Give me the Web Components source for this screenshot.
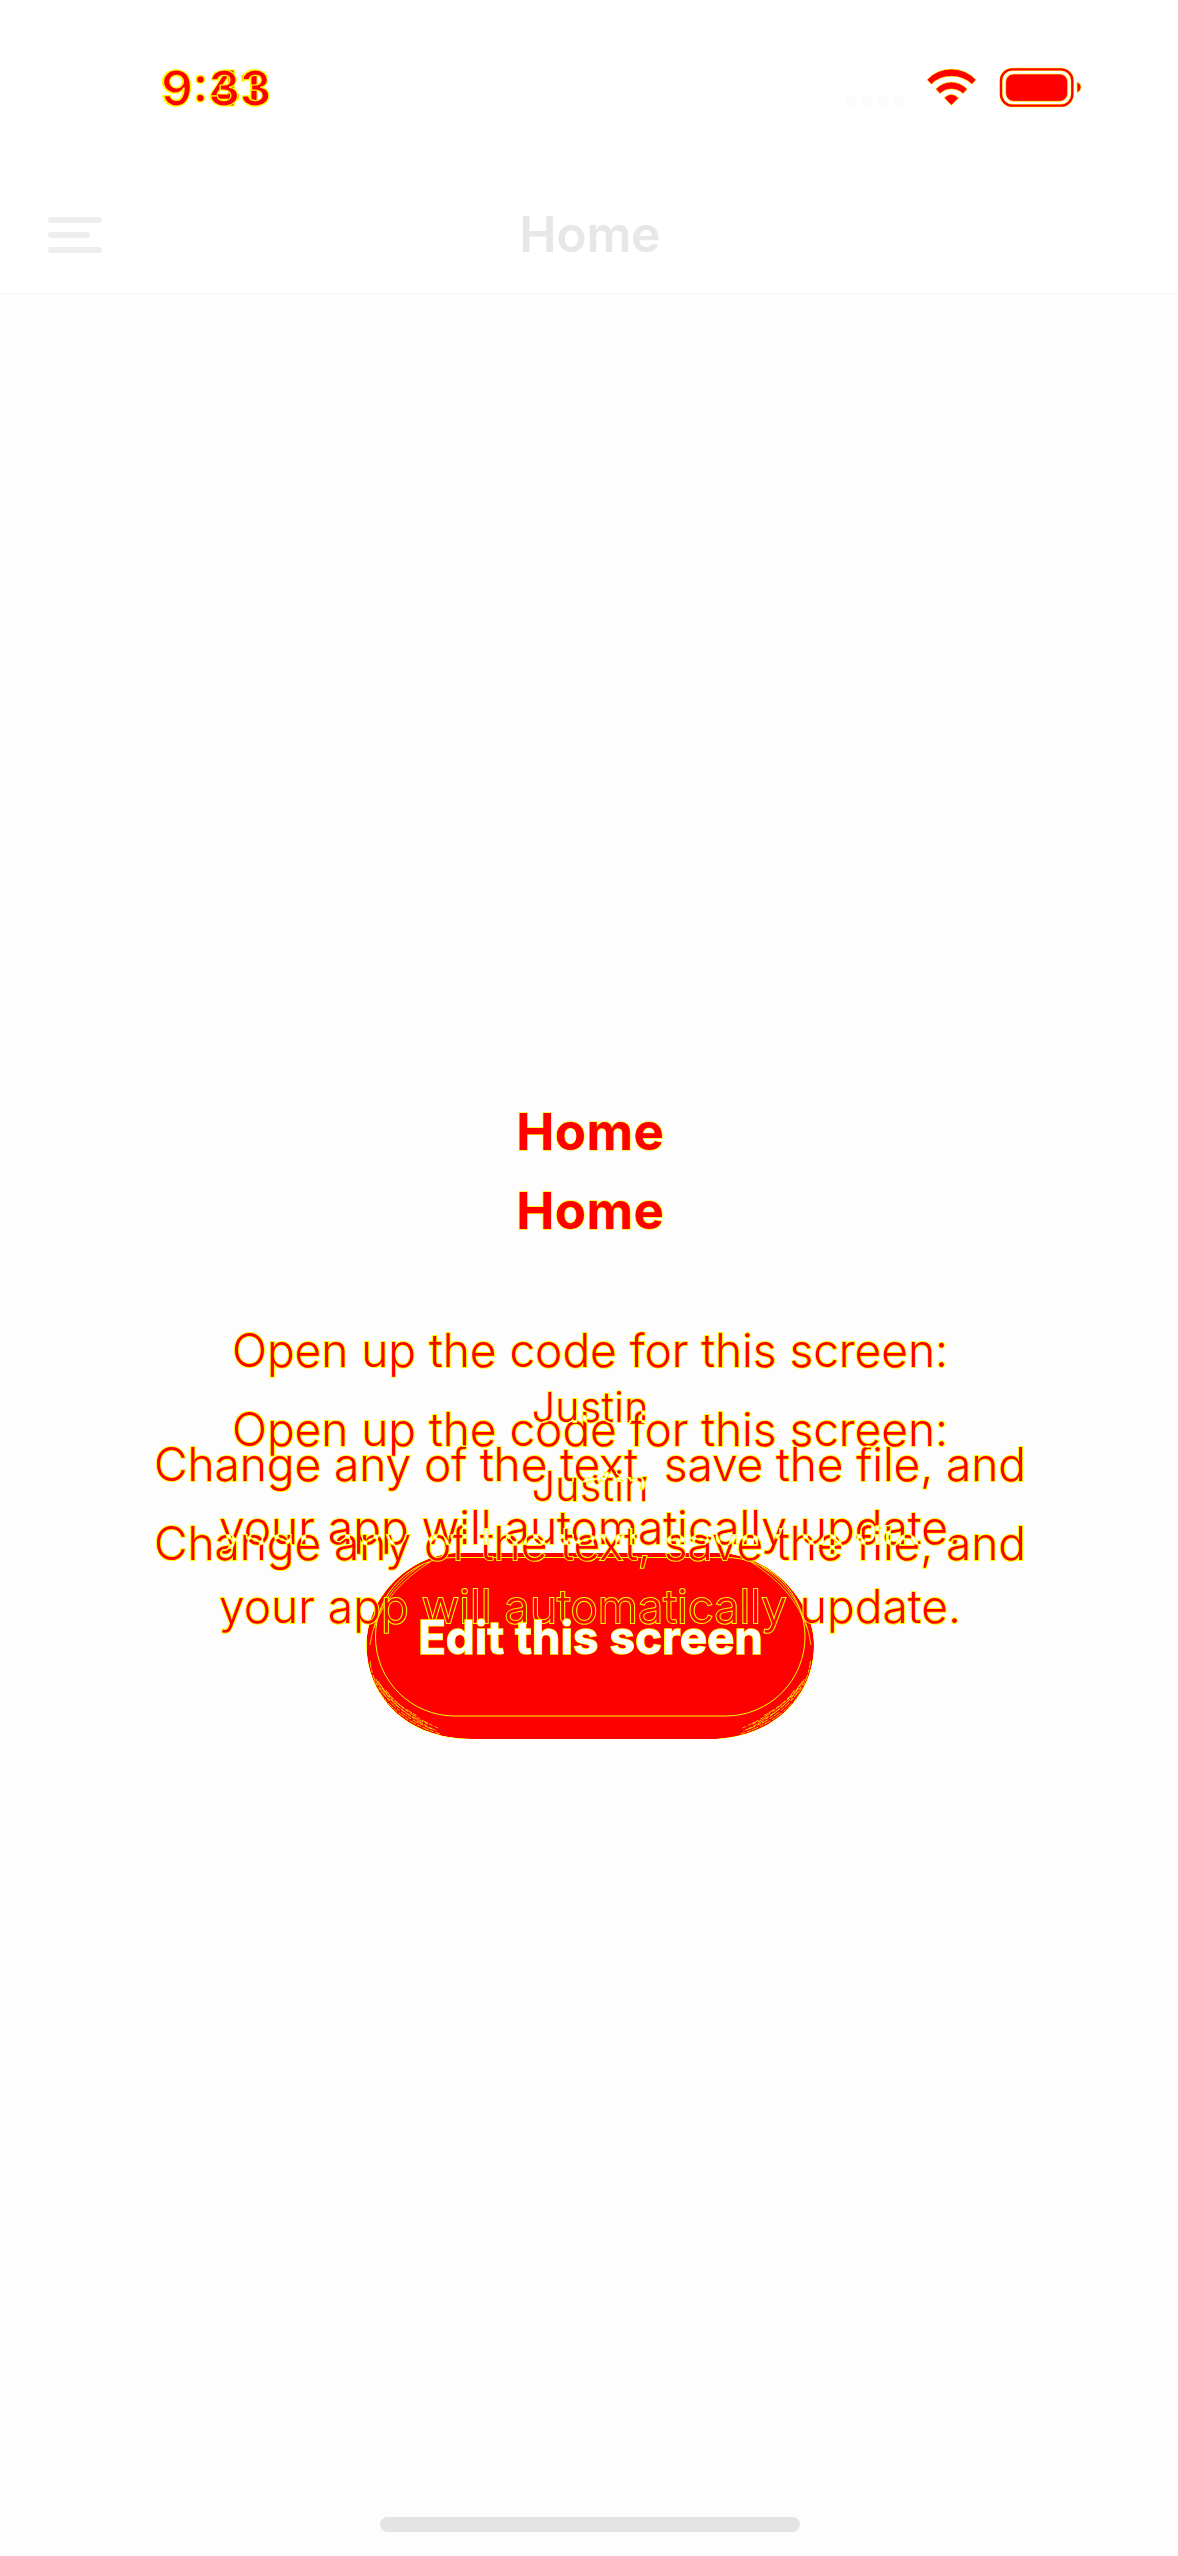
<!DOCTYPE html>
<html lang="en"><head><meta charset="utf-8"><title>Home</title>
<style>html,body{margin:0;background:#fdfdfd}body{font-family:Inter,"Liberation Sans",sans-serif}</style></head>
<body><diff-screen></diff-screen>
<script>
// One line of text, tracked so that it fills the given advance width.
class FitText extends HTMLElement{
 connectedCallback(){
  const r=this.attachShadow({mode:'open'});
  r.innerHTML='<style>:host{display:block;white-space:nowrap;text-align:center}span{display:inline-block}</style><span><slot></slot></span>';
  const s=r.querySelector('span'),n=this.textContent.length;
  const d=(+this.getAttribute('width')-s.getBoundingClientRect().width)/n;
  s.style.letterSpacing=d+'px';s.style.marginRight=-d+'px';
 }
}
customElements.define('fit-text',FitText);

class StatusBar extends HTMLElement{
 constructor(){super();this.attachShadow({mode:'open'}).innerHTML=`<style>
 :host{display:flex;height:176px;background:#fff;box-sizing:border-box;padding:50px 78px 0 160px;justify-content:space-between}
 .time{display:grid;height:75px;margin-top:1px;font:600 50px/75px Inter,sans-serif;color:red;-webkit-text-stroke:1.2px #ff0}
 .time>*{grid-area:1/1;justify-self:start}
 .time>:last-child{margin-left:1px}
 b{font-weight:inherit;position:relative;top:-4px}
 svg{display:block}
 </style><div class="time"><fit-text width="101">9<b>:</b>41</fit-text><fit-text width="110">9<b>:</b>33</fit-text></div>
 <svg width="270" height="75" viewBox="0 0 810 225" style="margin-right:0">
 <g fill="#fcfcfc"><rect x="48" y="137" width="31" height="31" rx="10"/><rect x="95" y="137" width="31" height="31" rx="10"/><rect x="143" y="137" width="31" height="31" rx="10"/><rect x="191" y="137" width="31" height="31" rx="10"/></g>
 <g fill="red" stroke="#ff0" stroke-width="2"><path d="M291 89Q321 57 364 57T438 89L426 103Q400 79 364 79T304 103Z"/><path d="M317 117Q338 96 364 96T412 117L399 131Q384 117 364 117T330 131Z"/><path d="M343 144Q353 133 364 133T386 144L364 166Z"/></g>
 <rect x="513" y="58" width="214" height="109" rx="34" fill="none" stroke="#ff0" stroke-width="10"/><rect x="513" y="58" width="214" height="109" rx="34" fill="none" stroke="red" stroke-width="7"/>
 <rect x="527" y="72" width="186" height="82" rx="24" fill="red" stroke="#ff0" stroke-width="2"/>
 <path d="M741 96Q753 100 753 112T741 128Z" fill="red" stroke="#ff0" stroke-width="2"/></svg>`}
}
customElements.define('status-bar',StatusBar);

class NavHeader extends HTMLElement{
 constructor(){super();this.attachShadow({mode:'open'}).innerHTML=`<style>
 :host{display:grid;grid-template-columns:1fr auto 1fr;height:119px;box-sizing:border-box;align-items:center;background:#fff;border-bottom:2px solid #f9f9f9;padding:0 48px}
 .menu{display:flex;flex-direction:column;gap:9px}
 i{height:6px;width:54px;border-radius:3px;background:#eee}i:nth-child(2){width:42px}
 fit-text{font-weight:600;font-size:50px;line-height:60px;color:#e7e7e7;padding-left:2px;margin-top:-1px}
 </style><div class="menu"><i></i><i></i><i></i></div><fit-text width="141">Home</fit-text>`}
}
customElements.define('nav-header',NavHeader);

class ScreenCopy extends HTMLElement{
 constructor(){super();this.attachShadow({mode:'open'}).innerHTML=`<style>
 :host{display:block;color:red;-webkit-text-stroke:2px #ff0;paint-order:stroke fill}
 :host([early]){color:#0ff;-webkit-text-stroke-color:#00f;mix-blend-mode:difference}
 .h{font-size:51px;line-height:60px;font-weight:700;margin-bottom:157px;-webkit-text-stroke-width:1.4px}
 .b{font-size:46px;line-height:62.5px;font-weight:300}
 .n{font-size:41px;line-height:50px;font-weight:300;margin-bottom:1.5px}
 </style><fit-text class="h" width="148">Home</fit-text>
 <fit-text class="b" width="716">Open up the code for this screen:</fit-text>
 <fit-text class="n" width="117">Justin</fit-text>
 <fit-text class="b" width="872">Change any of the text, save the file, and</fit-text>
 <fit-text class="b" width="742">your app will automatically update.</fit-text>`}
}
customElements.define('screen-copy',ScreenCopy);

class EditButton extends HTMLElement{
 constructor(){super();this.attachShadow({mode:'open'}).innerHTML=`<style>
 :host{display:grid;width:450px;height:188px}
 </style><svg width="450" height="188" viewBox="365 1552 450 188" fill="none">
 <path fill="red" d="M455 1553H725C780 1560 814 1608 814 1645C814 1695 775 1739 708 1739H472C405 1739 366.500 1695 366.500 1645C366.500 1600 405 1557 455 1553Z"/>
 <rect x="375.500" y="1557.500" width="429.500" height="158.500" rx="79.250" stroke="#ff0"/>
 <g stroke="#ff0" stroke-width=".8" stroke-dasharray="7 1 4 2">
 <path d="M376 1679Q390 1713 432 1729M378 1681Q395 1712 437 1731M380 1684Q397 1710 438 1728M373 1680Q390 1718 440 1734M382 1688Q397 1712 428 1724M370 1661Q373 1687 390 1700M386 1690Q397 1706 418 1716"/>
 <path transform="translate(1180.500)scale(-1 1)" d="M376 1679Q390 1713 432 1729M378 1681Q395 1712 437 1731M380 1684Q397 1710 438 1728M373 1680Q390 1718 440 1734M382 1688Q397 1712 428 1724M370 1661Q373 1687 390 1700M386 1690Q397 1706 418 1716"/>
 <path d="M370 1645Q377 1595 420 1566M374 1628Q387 1589 430 1562M811 1645Q804 1595 761 1566M807 1628Q794 1589 751 1562" stroke-dasharray="none"/></g></svg>`}
}
customElements.define('edit-button',EditButton);

// Stacks both states of the screen; the filter turns every soft edge yellow.
class DiffStage extends HTMLElement{
 constructor(){super();this.attachShadow({mode:'open'}).innerHTML=`<style>
 :host{display:block;padding-top:807px;mix-blend-mode:multiply}
 .stage{display:grid;justify-items:center;align-items:start;height:650px;background:#fff;isolation:isolate;filter:url(#edges)}
 .stage>*{grid-area:1/1}
 screen-copy{width:1178px;box-sizing:border-box;padding-left:2px}
 .late{margin-top:79px}
 edit-button{margin-top:450px;margin-left:2px}
 .label{margin-top:504px;font-size:46px;line-height:62.5px;font-weight:700;color:#fff;-webkit-text-stroke:1.4px #ff0;paint-order:stroke fill;margin-left:3px}
 svg{position:absolute}
 </style><svg width="0" height="0"><filter id="edges" x="0" y="0" width="1" height="1" color-interpolation-filters="sRGB"><feColorMatrix values="1 0 0 0 0  0 1 1 0 0  0 1 1 0 -1  0 0 0 1 0"/></filter></svg>
 <div class="stage"><edit-button></edit-button><screen-copy class="late"></screen-copy><screen-copy early></screen-copy><fit-text class="label" width="345">Edit this screen</fit-text></div>`}
}
customElements.define('diff-stage',DiffStage);

class DiffScreen extends HTMLElement{
 constructor(){super();this.attachShadow({mode:'open'}).innerHTML=`<style>
 :host{display:flex;flex-direction:column;width:1178px;height:2556px;background:#fdfdfd;overflow:hidden}
 .bar{width:420px;height:15px;border-radius:8px;background:#e4e4e4;margin:auto auto 24px 380px}
 </style><status-bar></status-bar><nav-header></nav-header><diff-stage></diff-stage><div class="bar"></div>`}
}
customElements.define('diff-screen',DiffScreen);
</script></body></html>
